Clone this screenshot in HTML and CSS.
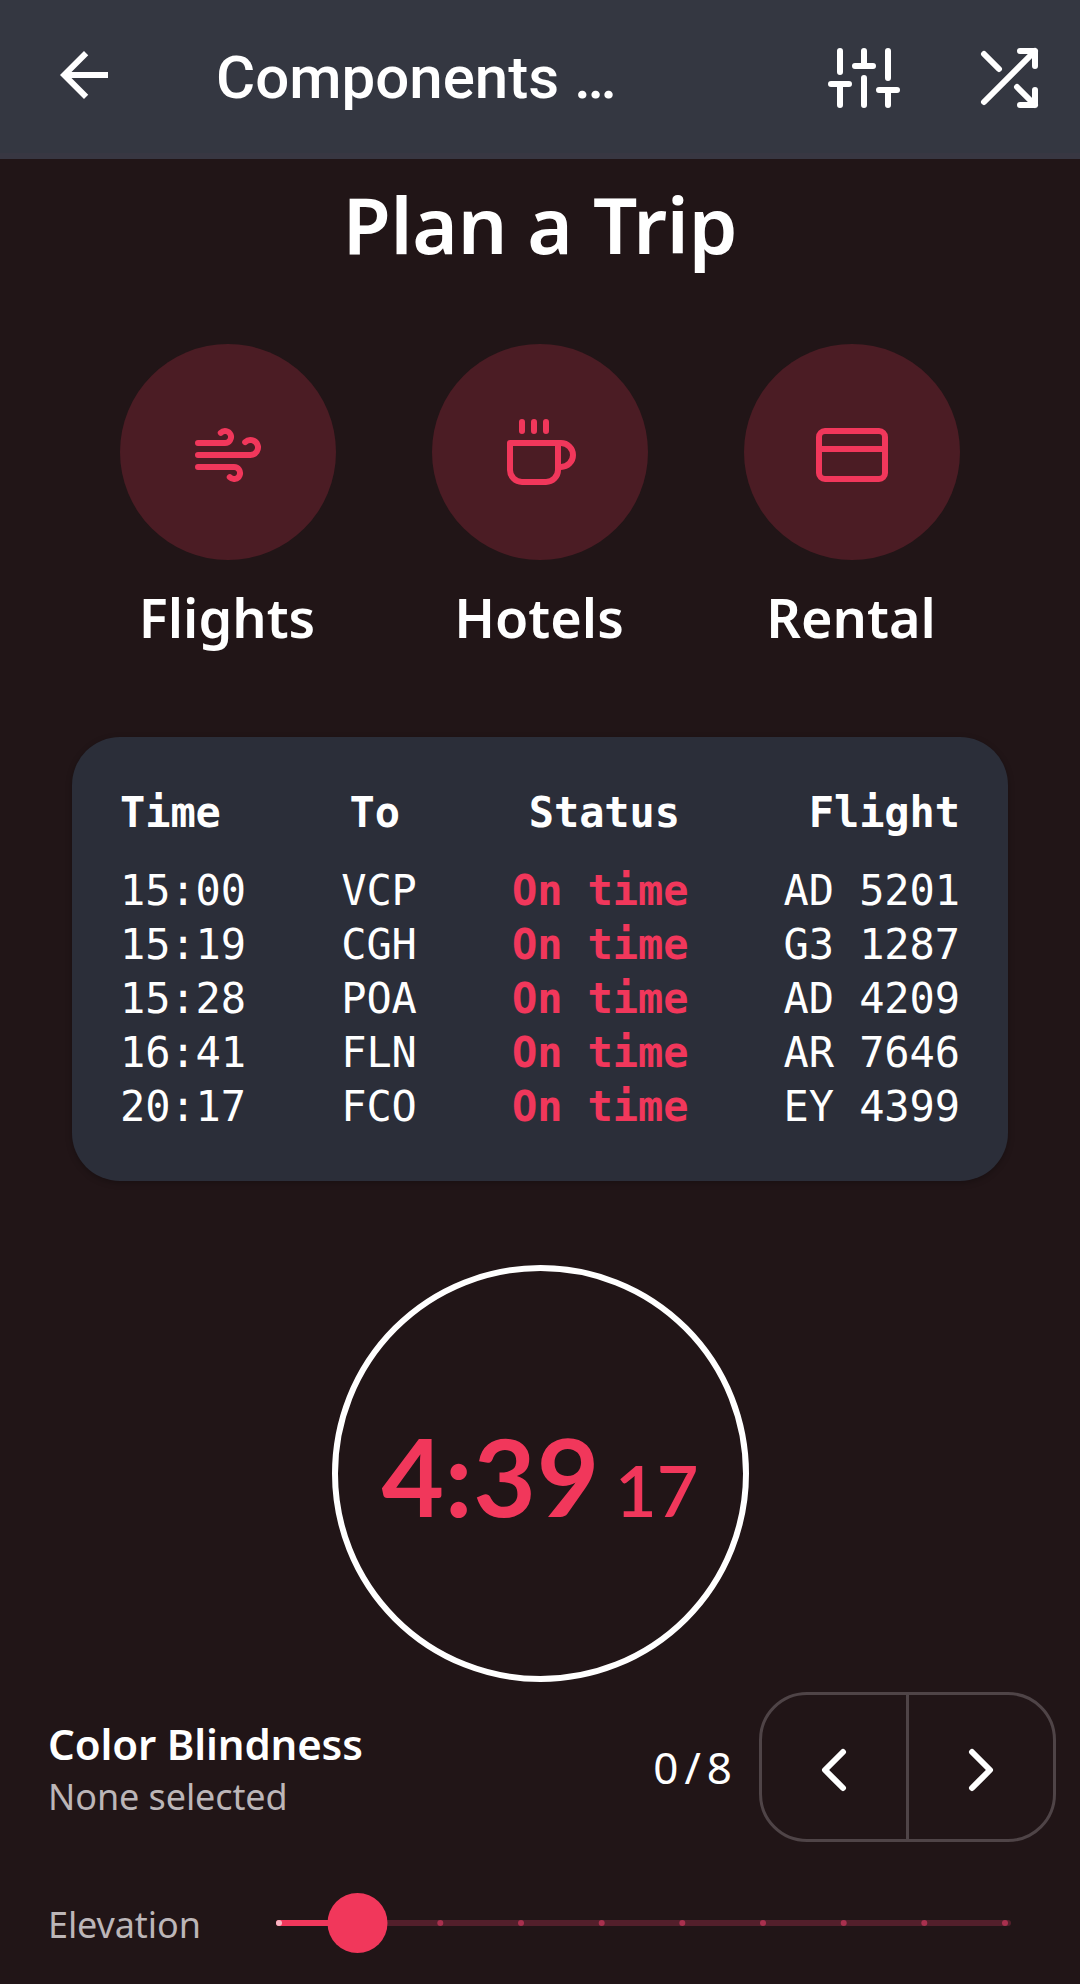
FILE: index.html
```html
<!DOCTYPE html>
<html lang="en">
<head>
<meta charset="utf-8">
<title>Components</title>
<link rel="stylesheet" href="styles.css">
</head>
<body>
<header class="appbar">
  <svg class="icon-fill back" viewBox="0 0 24 24"><path d="M20 11H7.83l5.59-5.59L12 4l-8 8 8 8 1.41-1.41L7.83 13H20v-2z"/></svg>
  <h1 class="appbar-title">Components …</h1>
  <svg class="icon sliders" viewBox="0 0 24 24"><path d="M4 21v-7M4 10V3M12 21v-9M12 8V3M20 21v-5M20 12V3M1 14h6M9 8h6M17 16h6"/></svg>
  <svg class="icon shuffle" viewBox="0 0 24 24"><path d="M16 3h5v5M4 20L21 3M21 16v5h-5M15 15l6 6M4 4l5 5"/></svg>
</header>
<main class="content">
  <h2 class="heading">Plan a Trip</h2>
  <nav class="actions">
    <div class="action">
      <span class="disc"><svg class="icon" viewBox="0 0 24 24"><path d="M9.59 4.59A2 2 0 1 1 11 8H2m10.59 11.41A2 2 0 1 0 14 16H2m15.73-8.27A2.5 2.5 0 1 1 19.5 12H2"/></svg></span>
      <span class="action-label">Flights</span>
    </div>
    <div class="action">
      <span class="disc"><svg class="icon" viewBox="0 0 24 24"><path d="M18 8h1a4 4 0 0 1 0 8h-1M2 8h16v9a4 4 0 0 1-4 4H6a4 4 0 0 1-4-4V8zM6 1v3M10 1v3M14 1v3"/></svg></span>
      <span class="action-label">Hotels</span>
    </div>
    <div class="action">
      <span class="disc"><svg class="icon" viewBox="0 0 24 24"><rect x="1" y="4" width="22" height="16" rx="2"/><path d="M1 10h22"/></svg></span>
      <span class="action-label">Rental</span>
    </div>
  </nav>
  <section class="board">
    <div class="row head"><span>Time</span><span>To</span><span>Status</span><span>Flight</span></div>
    <div class="row"><span>15:00</span><span>VCP</span><span class="status">On time</span><span>AD 5201</span></div>
    <div class="row"><span>15:19</span><span>CGH</span><span class="status">On time</span><span>G3 1287</span></div>
    <div class="row"><span>15:28</span><span>POA</span><span class="status">On time</span><span>AD 4209</span></div>
    <div class="row"><span>16:41</span><span>FLN</span><span class="status">On time</span><span>AR 7646</span></div>
    <div class="row"><span>20:17</span><span>FCO</span><span class="status">On time</span><span>EY 4399</span></div>
  </section>
  <section class="timer"><span class="timer-main">4:39</span><span class="timer-sub">17</span></section>
</main>
<section class="setting">
  <div class="setting-text"><span class="setting-title">Color Blindness</span><span class="muted">None selected</span></div>
  <span class="count">0/8</span>
  <div class="stepper">
    <button class="step"><svg class="icon" viewBox="0 0 24 24"><path d="M15 18l-6-6 6-6"/></svg></button>
    <button class="step"><svg class="icon" viewBox="0 0 24 24"><path d="M9 18l6-6-6-6"/></svg></button>
  </div>
</section>
<section class="elevation">
  <span class="muted elevation-label">Elevation</span>
  <svg class="slider" viewBox="0 0 735 60">
    <path class="track" d="M84 30H732"/>
    <path class="active" d="M3 30H84"/>
    <circle class="tick-on" cx="3" cy="30" r="3"/>
    <g class="tick">
      <circle cx="164.3" cy="30" r="3"/><circle cx="245" cy="30" r="3"/><circle cx="325.7" cy="30" r="3"/><circle cx="406.3" cy="30" r="3"/>
      <circle cx="487" cy="30" r="3"/><circle cx="567.7" cy="30" r="3"/><circle cx="648.3" cy="30" r="3"/><circle cx="729" cy="30" r="3"/>
    </g>
    <circle class="thumb" cx="81.5" cy="30" r="30"/>
  </svg>
</section>
</body>
</html>
```
FILE: styles.css
```css
* { box-sizing: border-box; }
body {
  margin: 0;
  width: 1080px;
  height: 1984px;
  overflow: hidden;
  background: #211517;
  color: #fff;
  font-family: "Noto Sans", sans-serif;
}
h1, h2 { margin: 0; }
svg { display: block; flex: none; }
.icon {
  width: 72px;
  height: 72px;
  fill: none;
  stroke: currentColor;
  stroke-width: 2;
  stroke-linecap: round;
  stroke-linejoin: round;
}
.icon-fill { width: 72px; height: 72px; fill: currentColor; }

.appbar {
  display: flex;
  align-items: flex-start;
  height: 159px;
  padding: 39px 36px 0 48px;
  background: #343741;
  border-bottom: 6px solid #383742;
}
.appbar-title {
  flex: 1;
  margin-left: 96px;
  font: 500 60px/72px Roboto, sans-serif;
  padding-top: 3px;
  white-space: nowrap;
}
.sliders { margin-top: 3px; }
.shuffle { margin: 3px 0 0 72px; }

.content { display: flex; flex-direction: column; align-items: center; padding-top: 17px; }
.heading { font-size: 78px; line-height: 96px; font-weight: 600; letter-spacing: -.2px; }
.actions { display: flex; gap: 96px; margin-top: 72px; }
.action { width: 216px; display: flex; flex-direction: column; align-items: center; }
.disc {
  display: flex;
  justify-content: center;
  width: 216px;
  height: 216px;
  padding-top: 75px;
  border-radius: 50%;
  background: #4b1c24;
  color: #f1375b;
}
.action-label {
  margin-top: 21px;
  padding-right: 2px;
  font-size: 54px;
  line-height: 72px;
  font-weight: 600;
  white-space: nowrap;
}

.board {
  width: 936px;
  height: 444px;
  margin-top: 84px;
  padding: 49px 48px 0;
  border-radius: 48px;
  background: #2b2e39;
  box-shadow: 0 2px 6px rgba(0, 0, 0, .25);
  font: 42px/54px "DejaVu Sans Mono", monospace;
  letter-spacing: -.08px;
}
.row { display: flex; justify-content: space-between; white-space: pre; }
.head { font-weight: 700; margin-bottom: 24px; }
.status { font-weight: 700; color: #f1375b; }

.timer {
  display: flex;
  justify-content: center;
  align-items: baseline;
  width: 417px;
  height: 417px;
  margin-top: 84px;
  padding-top: 144px;
  border: 6px solid #fff;
  border-radius: 50%;
  color: #f1375b;
  font-family: Lato, sans-serif;
  font-weight: 700;
}
.timer-main { font-size: 108px; line-height: 120px; letter-spacing: .7px; }
.timer-sub { font-size: 72px; line-height: 80px; margin-left: 15px; font-weight: 600; }

.setting { display: flex; align-items: center; height: 150px; margin-top: 10px; padding: 0 24px 0 48px; }
.setting-text { display: flex; flex-direction: column; flex: 1; padding-top: 4px; }
.setting-title { font-size: 42px; line-height: 55px; font-weight: 600; letter-spacing: -.15px; }
.muted { font-size: 36px; line-height: 52px; color: #bcb6b8; letter-spacing: -.1px; }
.count { font-size: 44px; line-height: 60px; letter-spacing: 6px; margin-right: 21px; }
.stepper { display: flex; width: 297px; height: 150px; border: 3px solid #4f4447; border-radius: 48px; }
.step {
  flex: 1;
  display: flex;
  justify-content: center;
  padding: 39px 0 0;
  border: 0;
  background: none;
  color: #fff;
}
.step + .step { border-left: 3px solid #4f4447; }

.elevation { display: flex; align-items: center; height: 60px; margin-top: 51px; padding-left: 48px; }
.elevation-label { width: 228px; padding-top: 4px; }
.slider { width: 735px; height: 60px; }
.track, .active { fill: none; stroke-width: 6; stroke-linecap: round; }
.track { stroke: #531f2b; }
.active { stroke: #f1375b; }
.tick { fill: #a9304e; }
.tick-on { fill: #f9b4c2; }
.thumb { fill: #f1375b; }
```
